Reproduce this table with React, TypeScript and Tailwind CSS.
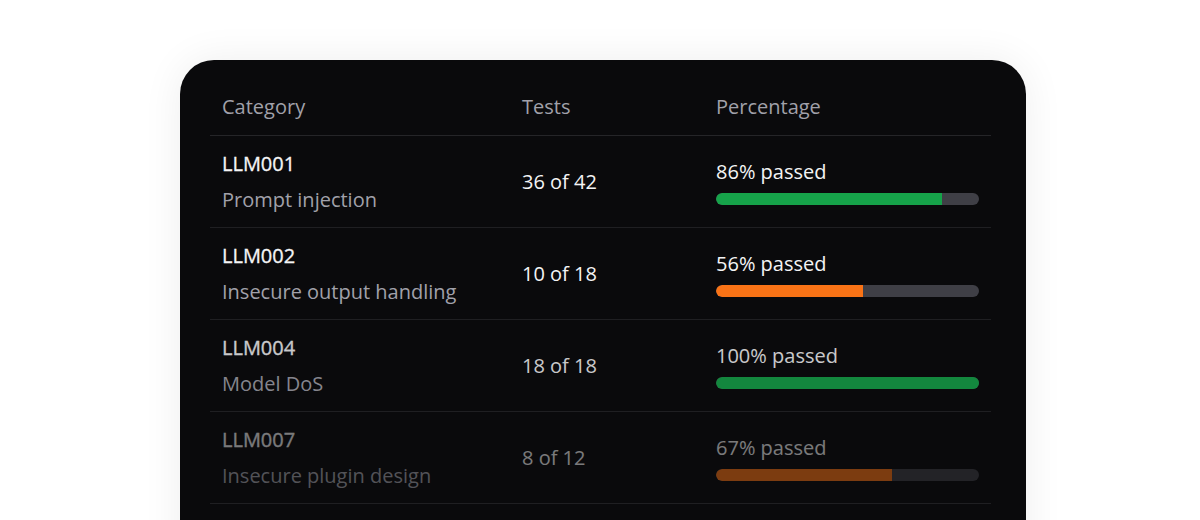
import React from 'react';

interface Row {
  code: string;
  name: string;
  passed: number;
  total: number;
  tone: 'green' | 'orange';
  fade: string;
}

const rows: Row[] = [
  { code: 'LLM001', name: 'Prompt injection', passed: 36, total: 42, tone: 'green', fade: 'opacity-100' },
  { code: 'LLM002', name: 'Insecure output handling', passed: 10, total: 18, tone: 'orange', fade: 'opacity-100' },
  { code: 'LLM004', name: 'Model DoS', passed: 18, total: 18, tone: 'green', fade: 'opacity-[0.82]' },
  { code: 'LLM007', name: 'Insecure plugin design', passed: 8, total: 12, tone: 'orange', fade: 'opacity-[0.48]' },
];

const App: React.FC = () => {
  return (
    <div className="min-h-screen bg-white font-['Open_Sans',sans-serif] overflow-hidden">
      <div className="pt-[60px] pl-[180px]">
        <div className="w-[846px] h-[520px] rounded-[34px] bg-[#0a0a0c] pl-[30px] pr-[35px] pt-[20px] shadow-[0_0_40px_rgba(0,0,0,0.07)]">
          {/* header */}
          <div className="grid grid-cols-[300px_194px_1fr] h-[56px] items-center pb-[2px] border-b border-[#252528] text-[20px] text-[#a1a1aa]">
            <div className="px-3">Category</div>
            <div className="px-3">Tests</div>
            <div className="px-3">Percentage</div>
          </div>

          {rows.map((row) => {
            const pct = Math.round((row.passed / row.total) * 100);
            return (
              <div key={row.code} className="border-b border-[#1f1f22]">
                <div className={`grid grid-cols-[300px_194px_1fr] h-[91px] items-center text-[20px] ${row.fade}`}>
                  <div className="px-3 flex flex-col gap-2">
                    <span className="leading-[28px] font-medium text-[#f4f4f5] [-webkit-text-stroke:0.3px_#f4f4f5]">{row.code}</span>
                    <span className="leading-[28px] text-[#a1a1aa]">{row.name}</span>
                  </div>
                  <div className="px-3 text-[#f4f4f5]">
                    {row.passed} of {row.total}
                  </div>
                  <div className="px-3 flex flex-col gap-[7px]">
                    <span className="leading-[28px] text-[#f4f4f5]">{pct}% passed</span>
                    <div className="h-[12px] w-full rounded-full bg-[#3f3f46] overflow-hidden">
                      <div
                        className={`h-full rounded-l-full ${row.tone === 'green' ? 'bg-[#16a34a]' : 'bg-[#f97316]'}`}
                        style={{ width: `${pct}%` }}
                      />
                    </div>
                  </div>
                </div>
              </div>
            );
          })}
        </div>
      </div>
    </div>
  );
};

export default App;
